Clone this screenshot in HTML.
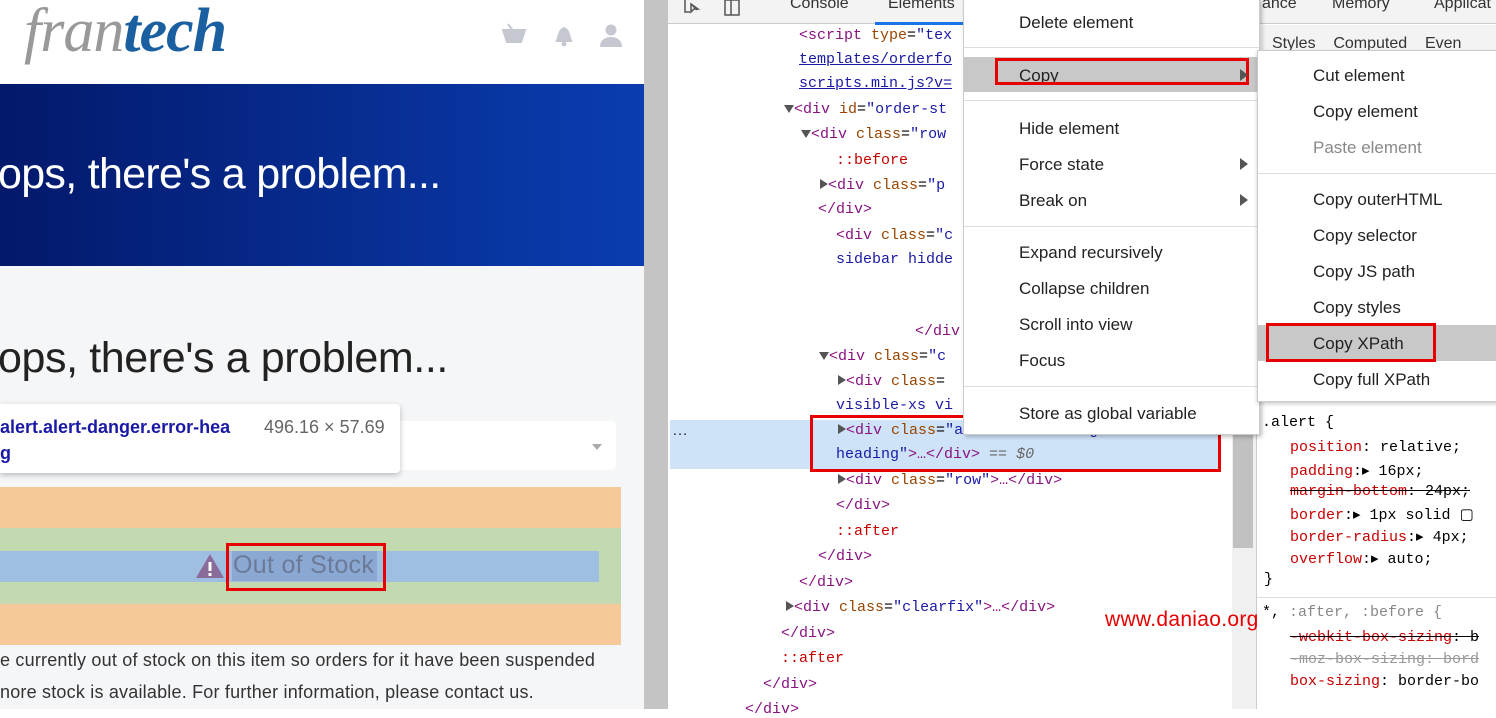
<!DOCTYPE html>
<html><head><meta charset="utf-8"><style>
*{margin:0;padding:0;box-sizing:border-box}
body{width:1496px;height:709px;overflow:hidden;position:relative;background:#fff;font-family:"Liberation Sans",sans-serif}
.a{position:absolute;white-space:nowrap}
.m{font-family:"Liberation Mono",monospace;font-size:15px}
.tag{color:#881280}.at{color:#994500}.av{color:#1a1aa6}.ps{color:#c80000}
.mi{position:absolute;left:55px;font-size:17px;color:#222}
.sep{position:absolute;left:0;right:0;height:1px;background:#ddd}
.tri{display:inline-block;width:0;height:0;border-left:8px solid #555;border-top:5px solid transparent;border-bottom:5px solid transparent}
.tri2{display:inline-block;width:0;height:0;border-top:8px solid #555;border-left:5px solid transparent;border-right:5px solid transparent}
.st{color:#c80000}
</style></head><body>
<div class="a" style="left:0;top:0;width:644px;height:709px;background:#f5f6f8"></div>
<div class="a" style="left:0;top:0;width:644px;height:84px;background:#fff"></div>
<div class="a" style="left:24px;top:-4px;font-family:'Liberation Serif',serif;font-style:italic;font-size:62px;color:#999;letter-spacing:-1px">fran<span style="color:#1a5fa0;font-weight:bold">tech</span></div>
<svg class="a" style="left:500px;top:22px" width="130" height="28"><path d="M3 8h22l-4 12H7z M8 2l6 8" fill="#c5c8d0" stroke="#c5c8d0" stroke-width="2"/><path d="M55 20c3-3 2-13 9-15 7 2 6 12 9 15z" fill="#c5c8d0"/><circle cx="64" cy="22" r="2.5" fill="#c5c8d0"/><circle cx="111" cy="8" r="5.5" fill="#c5c8d0"/><path d="M100 25c0-6 4-10 11-10s11 4 11 10z" fill="#c5c8d0"/></svg>
<div class="a" style="left:0;top:84px;width:644px;height:182px;background:linear-gradient(90deg,#03196b,#0a3db0)"></div>
<div class="a" style="left:-2px;top:150px;font-size:43px;color:#fff;letter-spacing:-0.7px">ops, there's a problem...</div>
<div class="a" style="left:-2px;top:334px;font-size:43px;color:#222;letter-spacing:-0.4px">ops, there's a problem...</div>
<div class="a" style="left:0;top:421px;width:616px;height:49px;background:#fff;border-radius:4px"></div>
<div class="a" style="left:592px;top:444px;border-top:6px solid #aaa;border-left:5px solid transparent;border-right:5px solid transparent"></div>
<div class="a" style="left:0;top:404px;width:400px;height:69px;background:#fff;border-radius:0 4px 4px 0;box-shadow:0 2px 6px rgba(0,0,0,.25)"></div>
<div class="a" style="left:0;top:417px;font-size:18px;font-weight:bold;color:#1a1aa6">alert.alert-danger.error-hea</div>
<div class="a" style="left:264px;top:417px;font-size:18px;color:#666">496.16 × 57.69</div>
<div class="a" style="left:0;top:443px;font-size:18px;font-weight:bold;color:#1a1aa6">g</div>
<div class="a" style="left:0;top:487px;width:621px;height:158px;background:#f6c99a"></div>
<div class="a" style="left:0;top:528px;width:621px;height:76px;background:#c3d9b0"></div>
<div class="a" style="left:0;top:551px;width:599px;height:31px;background:#9fbfe2"></div>
<svg class="a" style="left:195px;top:553px" width="30" height="26"><path d="M15 1L29 25H1z" fill="#8a6c9a"/><rect x="13.5" y="9" width="3" height="9" fill="#fff"/><rect x="13.5" y="20" width="3" height="3" fill="#fff"/></svg>
<div class="a" style="left:232px;top:551px;width:145px;height:30px;background:#8aa8d2"></div>
<div class="a" style="left:233px;top:551px;font-size:25px;color:#6a7a98;letter-spacing:0.3px">Out of Stock</div>
<div class="a" style="left:226px;top:543px;width:160px;height:48px;border:3px solid #e60000"></div>
<div class="a" style="left:0;top:650px;font-size:18px;color:#333;letter-spacing:0.2px">e currently out of stock on this item so orders for it have been suspended</div>
<div class="a" style="left:0;top:682px;font-size:18px;color:#333;letter-spacing:0.2px">nore stock is available. For further information, please contact us.</div>
<div class="a" style="left:644px;top:0;width:24px;height:709px;background:#c4c4c4"></div>
<div class="a" style="left:668px;top:0;width:828px;height:24px;background:#f3f3f3;border-bottom:1px solid #ccc"></div>
<svg class="a" style="left:683px;top:0" width="60" height="16"><path d="M2 0v12h5M8 4l6 6M8 4v8l3-3h4z" stroke="#555" fill="none" stroke-width="1.5"/><rect x="42" y="0" width="14" height="15" fill="none" stroke="#555" stroke-width="1.5"/><line x1="48" y1="0" x2="48" y2="15" stroke="#555" stroke-width="1.5"/></svg>
<div class="a" style="left:790px;top:-5px;font-size:16px;color:#333">Console</div>
<div class="a" style="left:888px;top:-5px;font-size:16px;color:#333">Elements</div>
<div class="a" style="left:875px;top:22px;width:90px;height:3px;background:#1a73e8"></div>
<div class="a" style="left:1262px;top:-5px;font-size:16px;color:#333">ance</div>
<div class="a" style="left:1332px;top:-5px;font-size:16px;color:#333">Memory</div>
<div class="a" style="left:1434px;top:-5px;font-size:16px;color:#333">Applicat</div>
<div class="a" style="left:1262px;top:25px;width:234px;height:34px;background:#f3f3f3"></div>
<div class="a" style="left:1272px;top:35px;font-size:16px;color:#333">Styles &nbsp;&nbsp; Computed &nbsp;&nbsp; Even</div>
<div class="a" style="left:670px;top:420px;width:548px;height:49px;background:#cfe3f8"></div>
<div class="a" style="left:672px;top:422px;font-size:16px;color:#333">…</div>
<div class="a" style="left:1232px;top:0;width:24px;height:709px;background:#f0f0f0"></div>
<div class="a" style="left:1233px;top:405px;width:20px;height:143px;background:#c1c1c1"></div>
<div class="a" style="left:1256px;top:0;width:1px;height:709px;background:#ccc"></div>
<div class="m">
<div class="a" style="left:799px;top:27px"><span class="tag">&lt;script</span> <span class="at">type</span>=<span class="av">"tex</span></div>
<div class="a av" style="left:799px;top:51px;text-decoration:underline">templates/orderfo</div>
<div class="a av" style="left:799px;top:75px;text-decoration:underline">scripts.min.js?v=</div>
<div class="a" style="left:784px;top:101px"><span class="tri2"></span><span class="tag">&lt;div</span> <span class="at">id</span>=<span class="av">"order-st</span></div>
<div class="a" style="left:801px;top:126px"><span class="tri2"></span><span class="tag">&lt;div</span> <span class="at">class</span>=<span class="av">"row</span></div>
<div class="a ps" style="left:836px;top:152px">::before</div>
<div class="a" style="left:820px;top:177px"><span class="tri"></span><span class="tag">&lt;div</span> <span class="at">class</span>=<span class="av">"p</span></div>
<div class="a tag" style="left:818px;top:201px">&lt;/div&gt;</div>
<div class="a" style="left:836px;top:227px"><span class="tag">&lt;div</span> <span class="at">class</span>=<span class="av">"c</span></div>
<div class="a av" style="left:836px;top:251px">sidebar hidde</div>
<div class="a tag" style="left:915px;top:323px">&lt;/div</div>
<div class="a" style="left:819px;top:348px"><span class="tri2"></span><span class="tag">&lt;div</span> <span class="at">class</span>=<span class="av">"c</span></div>
<div class="a" style="left:838px;top:373px"><span class="tri"></span><span class="tag">&lt;div</span> <span class="at">class</span>=</div>
<div class="a av" style="left:836px;top:397px">visible-xs vi</div>
<div class="a" style="left:838px;top:422px"><span class="tri"></span><span class="tag">&lt;div</span> <span class="at">class</span>=<span class="av">"alert alert-danger error</span></div>
<div class="a" style="left:836px;top:446px"><span class="av">heading"</span><span class="tag">&gt;…&lt;/div&gt;</span> <span style="color:#666">== <i>$0</i></span></div>
<div class="a" style="left:838px;top:472px"><span class="tri"></span><span class="tag">&lt;div</span> <span class="at">class</span>=<span class="av">"row"</span><span class="tag">&gt;…&lt;/div&gt;</span></div>
<div class="a tag" style="left:836px;top:497px">&lt;/div&gt;</div>
<div class="a ps" style="left:836px;top:523px">::after</div>
<div class="a tag" style="left:818px;top:548px">&lt;/div&gt;</div>
<div class="a tag" style="left:799px;top:574px">&lt;/div&gt;</div>
<div class="a" style="left:786px;top:599px"><span class="tri"></span><span class="tag">&lt;div</span> <span class="at">class</span>=<span class="av">"clearfix"</span><span class="tag">&gt;…&lt;/div&gt;</span></div>
<div class="a tag" style="left:781px;top:625px">&lt;/div&gt;</div>
<div class="a ps" style="left:781px;top:650px">::after</div>
<div class="a tag" style="left:763px;top:676px">&lt;/div&gt;</div>
<div class="a tag" style="left:745px;top:701px">&lt;/div&gt;</div>
<div class="a" style="left:1262px;top:414px">.alert {</div>
<div class="a" style="left:1290px;top:439px"><span class="st">position</span>: relative;</div>
<div class="a" style="left:1290px;top:461px"><span class="st">padding</span>:▸ 16px;</div>
<div class="a" style="left:1290px;top:483px;text-decoration:line-through"><span class="st">margin-bottom</span>: 24px;</div>
<div class="a" style="left:1290px;top:505px"><span class="st">border</span>:▸ 1px solid ▢</div>
<div class="a" style="left:1290px;top:527px"><span class="st">border-radius</span>:▸ 4px;</div>
<div class="a" style="left:1290px;top:549px"><span class="st">overflow</span>:▸ auto;</div>
<div class="a" style="left:1264px;top:571px">}</div>
<div class="a" style="left:1262px;top:604px">*, <span style="color:#888">:after, :before {</span></div>
<div class="a" style="left:1290px;top:629px;text-decoration:line-through"><span class="st">-webkit-box-sizing</span>: b</div>
<div class="a" style="left:1290px;top:651px;text-decoration:line-through;color:#999">-moz-box-sizing: bord</div>
<div class="a" style="left:1290px;top:673px"><span class="st">box-sizing</span>: border-bo</div>
</div>
<div class="a" style="left:1257px;top:597px;width:239px;height:1px;background:#ddd"></div>
<div class="a" style="left:1105px;top:608px;font-size:21px;color:#e60000;letter-spacing:0.3px">www.daniao.org</div>
<div class="a" style="left:810px;top:415px;width:411px;height:57px;border:3px solid #e60000"></div>
<div class="a" style="left:963px;top:-2px;width:297px;height:437px;background:#fff;border:1px solid #ccc;box-shadow:2px 2px 4px rgba(0,0,0,.25)">
<div class="mi" style="top:14px">Delete element</div>
<div class="sep" style="top:48px"></div>
<div class="a" style="left:0;top:58px;width:295px;height:35px;background:#c8c8c8"></div>
<div class="mi" style="top:67px">Copy</div>
<div class="a" style="left:31px;top:59px;width:254px;height:27px;border:3px solid #e60000"></div>
<div class="a" style="left:276px;top:70px;border-left:8px solid #555;border-top:6px solid transparent;border-bottom:6px solid transparent"></div>
<div class="sep" style="top:101px"></div>
<div class="mi" style="top:120px">Hide element</div>
<div class="mi" style="top:156px">Force state</div>
<div class="a" style="left:276px;top:159px;border-left:8px solid #555;border-top:6px solid transparent;border-bottom:6px solid transparent"></div>
<div class="mi" style="top:192px">Break on</div>
<div class="a" style="left:276px;top:195px;border-left:8px solid #555;border-top:6px solid transparent;border-bottom:6px solid transparent"></div>
<div class="sep" style="top:227px"></div>
<div class="mi" style="top:244px">Expand recursively</div>
<div class="mi" style="top:280px">Collapse children</div>
<div class="mi" style="top:316px">Scroll into view</div>
<div class="mi" style="top:352px">Focus</div>
<div class="sep" style="top:387px"></div>
<div class="mi" style="top:405px">Store as global variable</div>
</div>
<div class="a" style="left:1257px;top:50px;width:245px;height:352px;background:#fff;border:1px solid #ccc;box-shadow:0 2px 4px rgba(0,0,0,.2)">
<div class="mi" style="top:15px">Cut element</div>
<div class="mi" style="top:51px">Copy element</div>
<div class="mi" style="top:87px;color:#888">Paste element</div>
<div class="sep" style="top:122px"></div>
<div class="mi" style="top:139px">Copy outerHTML</div>
<div class="mi" style="top:175px">Copy selector</div>
<div class="mi" style="top:211px">Copy JS path</div>
<div class="mi" style="top:247px">Copy styles</div>
<div class="a" style="left:0;top:274px;width:245px;height:36px;background:#c8c8c8"></div>
<div class="mi" style="top:283px">Copy XPath</div>
<div class="a" style="left:8px;top:272px;width:170px;height:39px;border:3px solid #e60000"></div>
<div class="mi" style="top:319px">Copy full XPath</div>
</div>
</body></html>
